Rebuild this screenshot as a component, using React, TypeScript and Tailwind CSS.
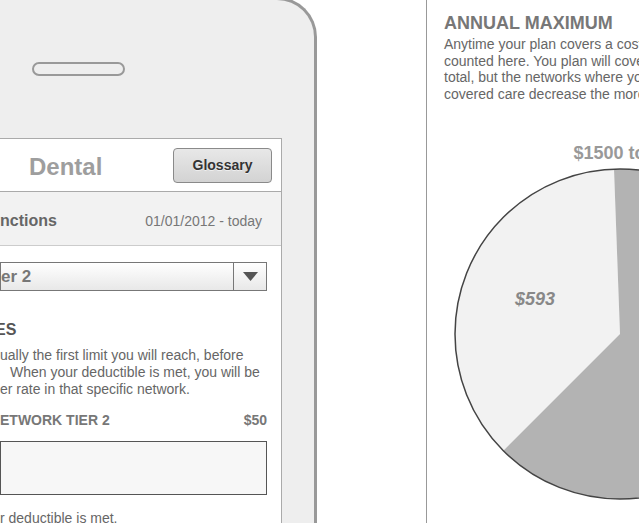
import React from "react";

export default function App() {
  return (
    <div className="w-[639px] h-[523px] overflow-hidden bg-white flex items-start font-['Liberation_Sans',Arial,sans-serif]">
      {/* Phone */}
      <div className="w-[317px] h-[530px] shrink-0 -mt-[3px] bg-[#eeeeee] border-t-[3px] border-r-[3px] border-[#999] rounded-tr-[40px] flex flex-col">
        <div className="ml-[32px] mt-[62px] w-[93px] h-[15px] rounded-full border-2 border-[#999]" />
        <div className="mt-[62px] w-[282px] flex-1 bg-white border-t border-r border-[#aaa] flex flex-col">
          {/* Header */}
          <div className="h-[53px] shrink-0 flex items-center justify-between border-b border-[#aaa]">
            <span className="ml-[29px] mt-[3px] text-[24px] leading-[28px] font-bold text-[#9e9e9e] [text-shadow:0_1px_0_#fff]">
              Dental
            </span>
            <button className="mr-[9px] w-[99px] h-[35px] rounded-[4px] border border-[#8a8a8a] bg-gradient-to-b from-[#e8e8e8] to-[#d3d3d3] text-[14px] font-bold text-[#333] [text-shadow:0_1px_0_#eee]">
              Glossary
            </button>
          </div>
          {/* Band */}
          <div className="h-[54px] shrink-0 pt-[5px] flex items-center justify-between bg-[#f2f2f2] border-b border-[#cccccc]">
            <span className="text-[16px] leading-[20px] font-bold text-[#666]">nctions</span>
            <span className="mr-[19px] text-[14px] leading-[17px] text-[#777]">01/01/2012 - today</span>
          </div>
          {/* Content */}
          <div className="pr-[14px] flex flex-col">
            <div className="mt-[16px] h-[29px] flex border border-[#777] bg-gradient-to-b from-white to-[#e8e8e8]">
              <div className="flex-1 flex items-center pt-[1px] text-[17px] font-bold text-[#777]">er 2</div>
              <div className="w-[33px] border-l border-[#777] flex items-center justify-center">
                <svg width="15" height="9" viewBox="0 0 15 9">
                  <path d="M0 0 L15 0 L7.5 9 Z" fill="#555" />
                </svg>
              </div>
            </div>
            <div className="mt-[29px] -ml-[5px] h-[20px] leading-[20px] text-[16px] font-bold text-[#555]">ES</div>
            <div className="mt-[7px] text-[14px] leading-[17px] text-[#666]">
              <div className="whitespace-nowrap">ually the first limit you will reach, before</div>
              <div className="whitespace-nowrap pl-[10px]">When your deductible is met, you will be</div>
              <div className="whitespace-nowrap">er rate in that specific network.</div>
            </div>
            <div className="mt-[13px] h-[18px] leading-[18px] flex justify-between text-[14px] font-bold text-[#777]">
              <span>ETWORK TIER 2</span>
              <span>$50</span>
            </div>
            <div className="mt-[12px] h-[54px] border border-[#555] bg-[#f7f7f7]" />
            <div className="mt-[14px] h-[18px] leading-[18px] text-[14px] text-[#666] whitespace-nowrap">
              r deductible is met.
            </div>
          </div>
        </div>
      </div>

      {/* Right panel */}
      <div className="ml-[109px] self-stretch border-l border-[#999] pl-[17px] flex-1 min-w-0 flex flex-col">
        <div className="mt-[13px] h-[20px] leading-[20px] text-[18px] font-bold text-[#777] whitespace-nowrap">
          ANNUAL MAXIMUM
        </div>
        <div className="mt-[3px] text-[14px] leading-[16.7px] text-[#666] whitespace-nowrap">
          <div>Anytime your plan covers a cost, it is</div>
          <div>counted here. You plan will cover $1500</div>
          <div>total, but the networks where you receive</div>
          <div>covered care decrease the more you use</div>
        </div>
        <div className="mt-[40px] ml-[6px] w-[340px] h-[20px] leading-[20px] text-center text-[18px] font-bold text-[#999] whitespace-nowrap">
          $1500 total
        </div>
        <svg className="mt-[3px] ml-[8px] shrink-0" width="340" height="340" viewBox="0 0 340 340">
          <path d="M168 168 L162 3 A165 165 0 0 0 51.3 284.7 Z" fill="#f2f2f2" />
          <path d="M168 168 L51.3 284.7 A165 165 0 1 0 162 3 Z" fill="#b3b3b3" />
          <circle cx="168" cy="168" r="165" fill="none" stroke="#444" strokeWidth="1.5" />
          <text
            x="83"
            y="138.5"
            textAnchor="middle"
            fontFamily="'Liberation Sans', Arial, sans-serif"
            fontSize="18"
            fontWeight="bold"
            fontStyle="italic"
            fill="#888"
          >
            $593
          </text>
        </svg>
      </div>
    </div>
  );
}
